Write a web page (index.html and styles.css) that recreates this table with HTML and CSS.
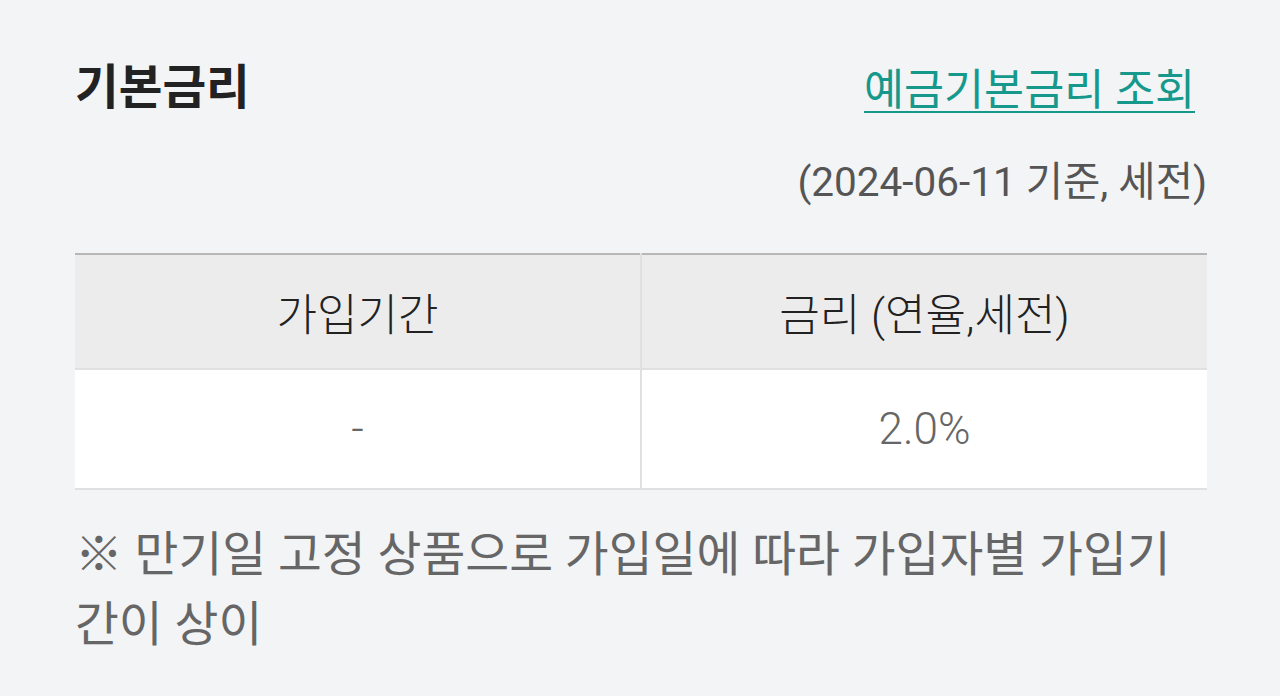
FILE: index.html
```html
<!DOCTYPE html>
<html lang="ko">
<head>
  <meta charset="UTF-8" />
  <meta name="viewport" content="width=device-width, initial-scale=1.0"/>
  <title>기본금리</title>
  <link rel="stylesheet" href="styles.css">
</head>

<body>
  <div class="container">
    <div class="title-row">
      <h2>기본금리</h2>
      <a class="rate-link" href="#">예금기본금리 조회</a>
    </div>

    <p class="basis">(2024-06-11 기준, 세전)</p>

    <!-- Rate Table -->
    <table class="rate-table">
      <thead>
        <tr>
          <th>가입기간</th>
          <th>금리 (연율,세전)</th>
        </tr>
      </thead>
      <tbody>
        <tr>
          <td>-</td>
          <td>2.0%</td>
        </tr>
      </tbody>
    </table>

    <p class="note">※ 만기일 고정 상품으로 가입일에 따라 가입자별 가입기간이 상이</p>
  </div>
</body>
</html>
```

FILE: styles.css
```css
body {
  font-family: Roboto, 'Noto Sans CJK KR', sans-serif;
  margin: 0;
  padding: 0;
  background-color: #f3f4f6;
}

.container {
  padding: 58px 73px 0 75px;
}

.title-row {
  display: flex;
  justify-content: space-between;
  align-items: flex-start;
}

h2 {
  color: #222;
  font-size: 47.5px;
  font-weight: 700;
  line-height: 60px;
  margin: 0;
}

.rate-link {
  color: #16998c;
  font-size: 43.5px;
  line-height: 60px;
  margin-top: 3px;
  margin-right: 12px;
  text-decoration: underline;
  text-underline-offset: 6px;
  text-decoration-thickness: 2px;
}

.basis {
  color: #555;
  font-size: 40.5px;
  line-height: 50px;
  text-align: right;
  margin: 36px 0 0 0;
}

.rate-table {
  width: 100%;
  margin-top: 46px;
  border-collapse: collapse;
  border-top: 2px solid #b7b7b7;
}

.rate-table th,
.rate-table td {
  width: 50%;
  text-align: center;
  font-size: 44px;
  font-weight: 300;
  padding: 0;
}

.rate-table th {
  height: 113px;
  background: #ececec;
  color: #222;
  border-bottom: 2px solid #e0e0e0;
}

.rate-table td {
  height: 118px;
  background: #ffffff;
  color: #666;
  border-bottom: 2px solid #e0e0e0;
}

.rate-table th + th,
.rate-table td + td {
  border-left: 2px solid #e0e0e0;
}

.note {
  color: #666;
  font-size: 47.7px;
  line-height: 70px;
  margin: 30px 0 0 0;
  word-break: break-all;
}
```
